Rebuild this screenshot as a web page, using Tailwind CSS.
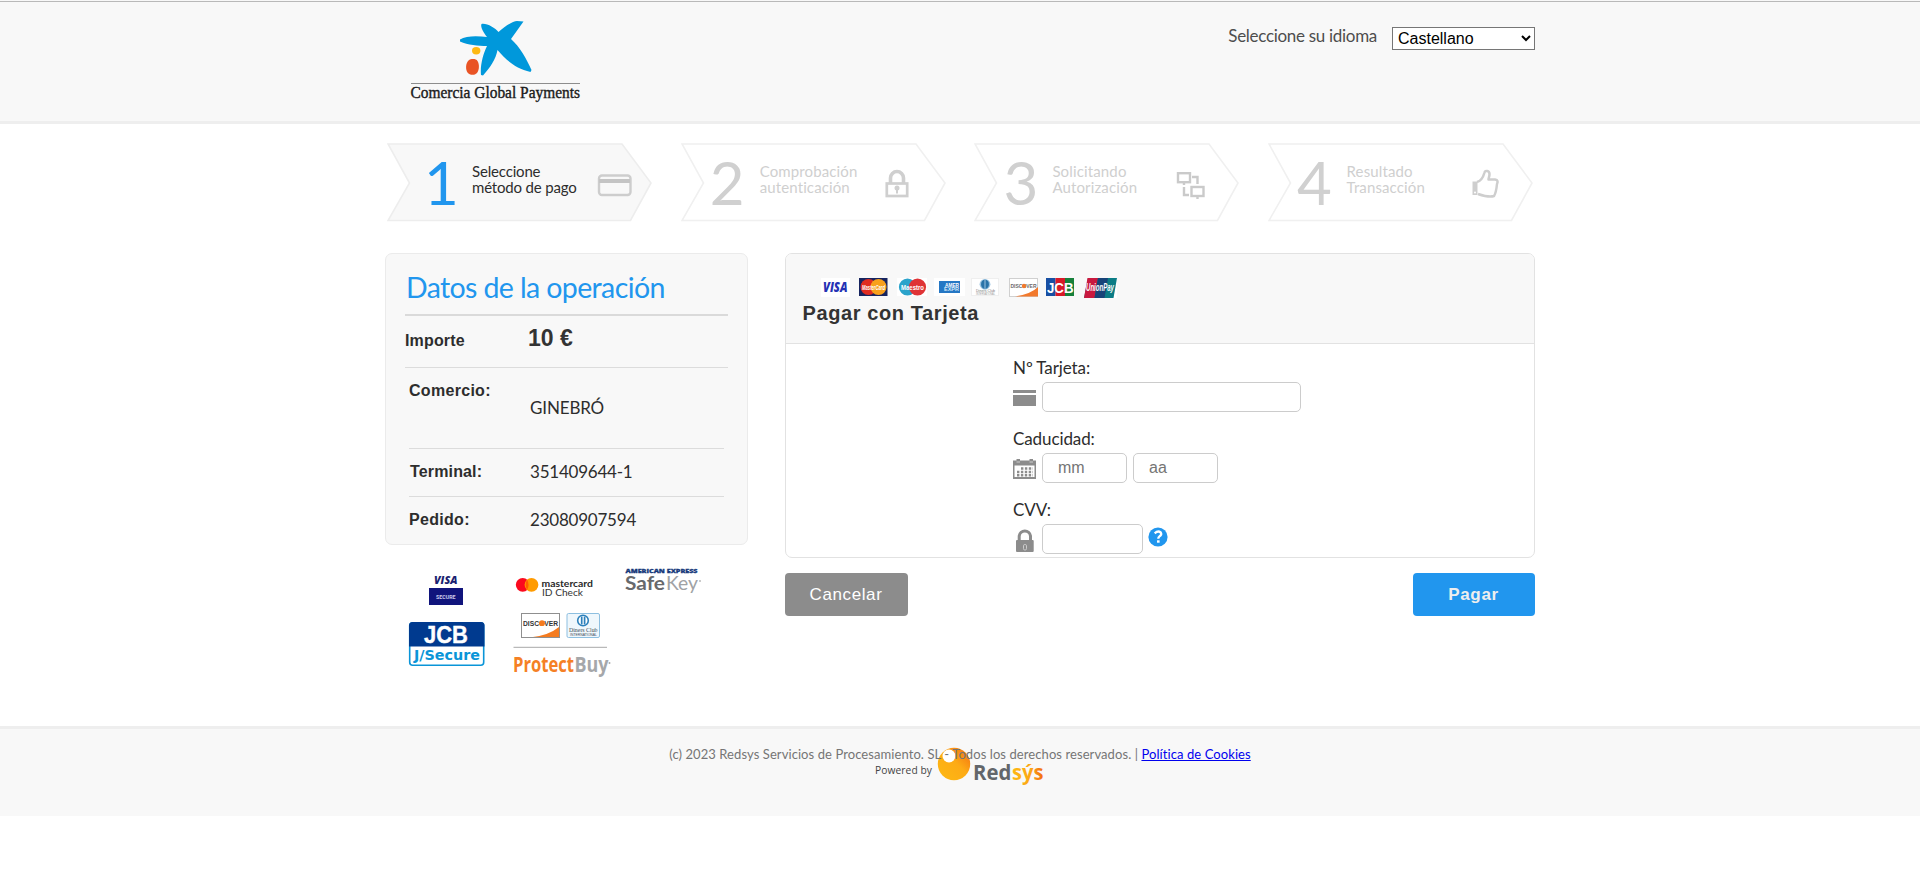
<!DOCTYPE html>
<html lang="es">
<head>
<meta charset="utf-8">
<title>Comercia Global Payments</title>
<script src="https://cdn.jsdelivr.net/npm/@tailwindcss/browser@4"></script>
</head>
<body class="bg-white font-['Lato',sans-serif] text-[#2d2d2d]">
<header class="h-[124px] border-b-[3px] border-[#eeeeee] bg-[#f8f8f8] pt-px">
  <div class="h-px bg-[#b9b9b9]"></div>
  <div class="mx-auto flex w-[1150px] justify-between">
    <svg class="mt-[14px] ml-[23px] overflow-visible" width="176" height="90" viewBox="408 16 176 90">
      <path fill="#0098db" d="M481.500 24C487 23 495 28 498.500 32C504 27 513 21 517 21L523.500 21.500L511 39C520 47 526 58 531.500 70L530.500 72C515 68 506 60 497.500 50C496 59 490 68 483 75.500L481 75C480 66 483 54 487 46C478 46 468 45 460 41.500L460 39.500C466 35.500 478 36 487 37C484 33 480 27 481.500 24Z"/>
      <ellipse cx="476.200" cy="50.700" rx="4.200" ry="3.700" fill="#fdb913"/>
      <path fill="#e95425" d="M468.500 60.500C471 58.500 476 58.500 477.500 61C479.500 64 479.500 70 477 73C474 76 469.500 75 467.500 72.500C465.500 69.500 465.500 63.500 468.500 60.500Z"/>
      <path d="M411 83.500H580" stroke="#8d8d8d"/>
      <text x="410.500" y="98" font-family="Liberation Serif, serif" font-size="17" fill="#1b1b1b" stroke="#1b1b1b" stroke-width=".4" textLength="169.500" lengthAdjust="spacingAndGlyphs">Comercia Global Payments</text>
    </svg>
    <div class="flex items-start pt-[25px]">
      <label class="mt-[-4px] mr-[15px] text-[17px] leading-[26px] tracking-[-.3px] text-[#4d4d4d]">Seleccione su idioma</label>
      <select class="h-[23px] w-[143px] border border-[#767676] bg-white pl-px font-['Liberation_Sans',sans-serif] text-[16px] text-black"><option>Castellano</option></select>
    </div>
  </div>
</header>

<main class="mx-auto h-[602px] w-[1150px]">
  <ol class="flex gap-[27.700px] pt-[18px] pl-[2px]">
    <li class="relative flex h-[80px] w-[266px] shrink-0">
      <svg class="absolute inset-0" width="266" height="80" viewBox="0 0 266 80"><path d="M1 2H235L264 41L243.500 78.500H1L22.500 41Z" fill="#f8f8f8" stroke="#ededed" stroke-width="1.600"/></svg>
      <span class="relative w-[84px] pl-[37px] text-[60px] leading-[80px] text-[#2196ee]">1</span>
      <span class="relative mt-[21px] w-[126px] pl-[1px] text-[15px] leading-[16px] tracking-[-.17px]">Seleccione<br>método de pago</span>
      <svg class="relative mt-[31px]" width="36" height="26" viewBox="0 0 36 26"><rect x="2" y="2.500" width="31.500" height="19.500" rx="3" fill="none" stroke="#cdcdcd" stroke-width="2.400"/><path d="M2 8H33" stroke="#c4c4c4" stroke-width="4"/></svg>
    </li>
    <li class="relative flex h-[80px] w-[266px] shrink-0">
      <svg class="absolute inset-0" width="266" height="80" viewBox="0 0 266 80"><path d="M1 2H235L264 41L243.500 78.500H1L22.500 41Z" fill="#fff" stroke="#f0f0f0" stroke-width="1.600"/></svg>
      <span class="relative w-[79px] pl-[29px] text-[60px] leading-[80px] text-[#d0d0d0]">2</span>
      <span class="relative mt-[21px] w-[125px] text-[15px] leading-[16px] tracking-[.12px] text-[#cfcfcf]">Comprobación<br>autenticación</span>
      <svg class="relative mt-[27px]" width="26" height="32" viewBox="0 0 26 32"><path d="M5.500 15V9A6.500 6.500 0 0 1 18.500 9V15" fill="none" stroke="#cfcfcf" stroke-width="3.600"/><rect x="1.800" y="14.500" width="20.400" height="12.500" fill="none" stroke="#cfcfcf" stroke-width="2.700"/><circle cx="12" cy="19" r="2.500" fill="#cfcfcf"/><path d="M12 18V24.500" stroke="#cfcfcf" stroke-width="2"/></svg>
    </li>
    <li class="relative flex h-[80px] w-[266px] shrink-0">
      <svg class="absolute inset-0" width="266" height="80" viewBox="0 0 266 80"><path d="M1 2H235L264 41L243.500 78.500H1L22.500 41Z" fill="#fff" stroke="#f0f0f0" stroke-width="1.600"/></svg>
      <span class="relative w-[78px] pl-[29px] text-[60px] leading-[80px] text-[#d0d0d0]">3</span>
      <span class="relative mt-[21px] w-[124px] text-[15px] leading-[16px] tracking-[.14px] text-[#cfcfcf]">Solicitando<br>Autorización</span>
      <svg class="relative mt-[28px]" width="30" height="32" viewBox="0 0 30 32" fill="none" stroke="#cacaca" stroke-width="2.400"><rect x="2" y="3.200" width="12" height="9"/><rect x="15.500" y="17" width="12" height="9"/><path d="M8 12V15M21.500 26V29M16 7H21.500V14M8 17V25H13"/></svg>
    </li>
    <li class="relative flex h-[80px] w-[266px] shrink-0">
      <svg class="absolute inset-0" width="266" height="80" viewBox="0 0 266 80"><path d="M1 2H235L264 41L243.500 78.500H1L22.500 41Z" fill="#fff" stroke="#f0f0f0" stroke-width="1.600"/></svg>
      <span class="relative w-[78.500px] pl-[29px] text-[60px] leading-[80px] text-[#d0d0d0]">4</span>
      <span class="relative mt-[21px] w-[124px] text-[15px] leading-[16px] tracking-[.12px] text-[#cfcfcf]">Resultado<br>Transacción</span>
      <svg class="relative mt-[27px]" width="30" height="32" viewBox="0 0 30 32"><path d="M6 13C10 12 12 9 13.500 3.500C14 1 18.500 1.500 18.500 5C18.500 8 17.500 9 17.500 10.500H24C27 11 27 13 26 15C25.500 20 25 24 23 27C19 28.500 10 26 7 25" fill="none" stroke="#cecece" stroke-width="2.500" stroke-linejoin="round"/><path d="M1.500 12.500H6.500V26H1.500Z" fill="#cecece"/><circle cx="4" cy="23.500" r="1" fill="#fff"/></svg>
    </li>
  </ol>

  <div class="mt-[31px] flex items-start justify-between">
    <aside class="w-[363px]">
      <section class="h-[292px] rounded-[7px] border border-[#ebebeb] bg-[#f8f8f8] px-[19px] pt-[16px]">
        <h1 class="h-[46px] border-b-2 border-[#dadada] pl-[1px] text-[28.500px] leading-[34px] tracking-[-.620px] text-[#2196ee]">Datos de la operación</h1>
        <dl class="flex h-[52px] border-b border-[#dcdcdc] font-['Liberation_Sans',sans-serif] font-bold">
          <dt class="w-[123px] pt-[14px] text-[16px] leading-[22px] tracking-[.15px]">Importe</dt>
          <dd class="pt-[11px] text-[23px] leading-[22px] text-[#333]">10 €</dd>
        </dl>
        <div class="mr-[4px] ml-[4px]">
          <dl class="flex h-[81px] border-b border-[#dcdcdc]">
            <dt class="w-[121px] pt-[11px] font-['Liberation_Sans',sans-serif] text-[16px] leading-[24px] font-bold tracking-[.3px]">Comercio:</dt>
            <dd class="pt-[27px] text-[17px] leading-[26px] tracking-[-.15px]">GINEBRÓ</dd>
          </dl>
          <dl class="flex h-[48px] border-b border-[#dcdcdc]">
            <dt class="w-[121px] pt-[11px] pl-px font-['Liberation_Sans',sans-serif] text-[16px] leading-[24px] font-bold tracking-[.15px]">Terminal:</dt>
            <dd class="pt-[10px] text-[17px] leading-[26px] tracking-[-.22px]">351409644-1</dd>
          </dl>
          <dl class="flex h-[47px]">
            <dt class="w-[121px] pt-[11px] font-['Liberation_Sans',sans-serif] text-[16px] leading-[24px] font-bold tracking-[.3px]">Pedido:</dt>
            <dd class="pt-[10px] text-[17px] leading-[26px] tracking-[-.22px]">23080907594</dd>
          </dl>
        </div>
      </section>
      <svg class="mt-[15px] block" width="340" height="130" viewBox="385 560 340 130">
        <text x="434" y="584" font-family="Open Sans, sans-serif" font-weight="800" font-style="italic" font-size="11" fill="#1a1f71" textLength="23.500" lengthAdjust="spacingAndGlyphs">VISA</text>
        <rect x="429" y="588" width="34" height="17" fill="#10147c"/>
        <text x="436" y="599" font-family="Roboto, sans-serif" font-weight="700" font-size="6" fill="#c9caea" textLength="19.500" lengthAdjust="spacingAndGlyphs">SECURE</text>
        <rect x="409.700" y="622.700" width="74" height="42.600" rx="3" fill="#fff" stroke="#0a95d8" stroke-width="1.600"/>
        <path d="M409 646.500V625.500Q409 622 412.500 622H481Q484.500 622 484.500 625.500V646.500Z" fill="#003a8f"/>
        <text x="424" y="643" font-family="Liberation Sans, sans-serif" font-weight="700" font-size="23.500" fill="#fff" stroke="#fff" stroke-width=".4" textLength="44" lengthAdjust="spacingAndGlyphs">JCB</text>
        <text x="414" y="660" font-family="DejaVu Sans, sans-serif" font-weight="700" font-size="14" fill="#0a95d8" textLength="66" lengthAdjust="spacingAndGlyphs">J/Secure</text>
        <circle cx="522.700" cy="584.800" r="6.900" fill="#fb0a1e"/><circle cx="531.500" cy="584.800" r="6.900" fill="#ff9b00"/><path d="M527.100 579.500Q530 584.800 527.100 590.100Q524.200 584.800 527.100 579.500" fill="#ff5f00"/>
        <text x="541.500" y="587" font-family="Lato, sans-serif" font-weight="700" font-size="9" fill="#292929" textLength="51.500" lengthAdjust="spacingAndGlyphs">mastercard</text>
        <text x="542" y="596" font-family="Lato, sans-serif" font-size="8.500" fill="#333" textLength="41" lengthAdjust="spacingAndGlyphs">ID Check</text>
        <text x="625.500" y="573.200" font-family="Open Sans, sans-serif" font-weight="800" font-size="5.600" fill="#16397b" stroke="#16397b" stroke-width=".3" textLength="72" lengthAdjust="spacingAndGlyphs">AMERICAN EXPRESS</text>
        <text x="625" y="590" font-family="Lato, sans-serif" font-weight="700" font-size="19" fill="#67696c" textLength="40" lengthAdjust="spacingAndGlyphs">Safe</text>
        <text x="666" y="590" font-family="Lato, sans-serif" font-size="19" fill="#a0a2a5" textLength="32" lengthAdjust="spacingAndGlyphs">Key</text><circle cx="700" cy="581" r=".8" fill="#888"/>
        <rect x="521.500" y="613.500" width="38" height="24" fill="#fff" stroke="#8f8f8f"/><path d="M533 637Q549 635 559 627V637Z" fill="#f47b20"/>
        <text x="523" y="626" font-family="Liberation Sans, sans-serif" font-weight="700" font-size="7.500" fill="#333" textLength="35" lengthAdjust="spacingAndGlyphs">DISC<tspan fill="#f47b20">O</tspan>VER</text><circle cx="542" cy="623.200" r="2.900" fill="#f47b20"/>
        <rect x="567" y="613.500" width="32.500" height="24" rx="1.500" fill="#eff7fc" stroke="#8dbfe0"/><circle cx="583" cy="620.500" r="5.300" fill="#fff" stroke="#2d80bb" stroke-width="1.600"/><path d="M581.700 616.500V624.500M584.600 616.500V624.500" stroke="#2d80bb" stroke-width="1.700"/>
        <text x="569" y="632" font-family="Liberation Serif, serif" font-size="6.500" fill="#404a55" textLength="28.500" lengthAdjust="spacingAndGlyphs">Diners Club</text>
        <text x="570" y="635.500" font-family="Liberation Sans, sans-serif" font-size="2.800" fill="#404a55" textLength="27" lengthAdjust="spacingAndGlyphs">INTERNATIONAL</text>
        <path d="M513.500 647.300H607" stroke="#a8a8a8"/>
        <text x="513" y="672" font-family="Open Sans, sans-serif" font-weight="700" font-size="20.500" fill="#f58025" textLength="61" lengthAdjust="spacingAndGlyphs">Protect</text>
        <text x="574.500" y="672" font-family="Open Sans, sans-serif" font-weight="700" font-size="20.500" fill="#a5a7aa" textLength="34" lengthAdjust="spacingAndGlyphs">Buy</text><circle cx="609.500" cy="663" r="1" fill="#aaa"/>
      </svg>
    </aside>

    <section class="w-[750px]">
      <form class="h-[305px] rounded-[7px] border border-[#e2e2e2] bg-white">
        <div class="h-[90px] rounded-t-[6px] border-b border-[#e2e2e2] bg-[#f8f8f8] pt-[24px] pl-[17px]">
          <svg class="ml-[18px] block overflow-visible" width="300" height="21" viewBox="821 278 300 21">
            <rect x="821" y="278" width="29" height="19" fill="#fff"/><text x="823" y="292" font-family="Open Sans, sans-serif" font-weight="800" font-style="italic" font-size="13.500" fill="#2432b4" textLength="24.500" lengthAdjust="spacingAndGlyphs">VISA</text>
            <rect x="859" y="278" width="28.500" height="18" fill="#17245f"/><circle cx="868.500" cy="287" r="8" fill="#e02c20"/><circle cx="878.500" cy="287" r="8" fill="#f8a01c"/><text x="862" y="290" font-family="Liberation Sans, sans-serif" font-weight="700" font-style="italic" font-size="7" fill="#fff" textLength="23" lengthAdjust="spacingAndGlyphs">MasterCard</text>
            <rect x="897" y="278" width="30" height="18" fill="#fff"/><circle cx="907.500" cy="287" r="8.600" fill="#2ba3cb"/><circle cx="917.500" cy="287" r="8.600" fill="#df3336"/><text x="901" y="290" font-family="Liberation Sans, sans-serif" font-weight="700" font-size="7.500" fill="#fff" textLength="23" lengthAdjust="spacingAndGlyphs">Maestro</text>
            <rect x="934" y="278" width="31" height="18" fill="#fff"/><rect x="939" y="281" width="21" height="12" fill="#2577c4"/><text x="945" y="286.500" font-family="Liberation Sans, sans-serif" font-weight="700" font-size="5.500" fill="#fff" textLength="14" lengthAdjust="spacingAndGlyphs">AMER</text><text x="944" y="291" font-family="Liberation Sans, sans-serif" font-weight="700" font-size="5" fill="#d4e8f8" textLength="15" lengthAdjust="spacingAndGlyphs">EXPR</text>
            <rect x="971.500" y="278.500" width="27" height="17" fill="#fff" stroke="#efefef"/><circle cx="985" cy="284.300" r="5.400" fill="#9cc4e1"/><path d="M984.500 279.500A5 5 0 0 0 984.500 289ZM985.500 279.500A5 5 0 0 1 985.500 289Z" fill="#2a73a8"/><text x="976" y="292" font-family="Liberation Sans, sans-serif" font-size="3.500" fill="#777" textLength="19" lengthAdjust="spacingAndGlyphs">Diners Club</text><text x="976" y="295" font-family="Liberation Sans, sans-serif" font-size="3" fill="#999" textLength="19" lengthAdjust="spacingAndGlyphs">INTERNATIONAL</text>
            <rect x="1009.500" y="278.500" width="28" height="18" fill="#fff" stroke="#d0d0d0"/><path d="M1015 296.500Q1031 294 1038 287V296.500Z" fill="#f2792c"/><text x="1010.500" y="288" font-family="Liberation Sans, sans-serif" font-weight="700" font-size="6" fill="#6a6a6a" textLength="26" lengthAdjust="spacingAndGlyphs">DISCOVER</text><circle cx="1024" cy="286" r="2.200" fill="#f2792c"/>
            <rect x="1046" y="278" width="9.500" height="18" fill="#174fa3"/><rect x="1055.500" y="278" width="9.500" height="18" fill="#d71928"/><rect x="1065" y="278" width="9" height="18" fill="#16803b"/><text x="1047" y="292.500" font-family="Liberation Sans, sans-serif" font-weight="700" font-size="15" fill="#fff" textLength="26.500" lengthAdjust="spacingAndGlyphs">JCB</text>
            <path d="M1088 278H1117V298H1084Z" fill="#0b7c85"/><path d="M1087.500 278H1098L1094.500 298H1084Z" fill="#c9193f"/><path d="M1098 278H1108L1104.500 298H1094.500Z" fill="#174378"/><path d="M1117 278V298H1113.500Z" fill="#fff"/><text x="1086" y="291" font-family="Liberation Sans, sans-serif" font-weight="700" font-style="italic" font-size="10" fill="#fff" textLength="28" lengthAdjust="spacingAndGlyphs">UnionPay</text>
          </svg>
          <h2 class="mt-[3px] ml-[-.500px] font-['Liberation_Sans',sans-serif] text-[20px] leading-[22px] font-bold tracking-[.6px] text-[#333]">Pagar con Tarjeta</h2>
        </div>
        <div class="flex flex-col pl-[227px] text-[17px]">
          <label class="h-[38px] pt-[11px] leading-[26px] tracking-[-.1px]">Nº Tarjeta:</label>
          <div class="flex h-[33px]">
            <svg class="mt-[8px] mr-[6px]" width="23" height="16"><path d="M0 0H23V3H0ZM0 5H23V16H0Z" fill="#8c8c8c"/></svg>
            <input class="h-[30px] w-[259px] rounded-[5px] border border-[#ccc] bg-white px-[15px]">
          </div>
          <label class="h-[38px] pt-[11px] leading-[26px] tracking-[-.1px]">Caducidad:</label>
          <div class="flex h-[33px] font-['Liberation_Sans',sans-serif] text-[16px]">
            <svg class="mt-[6px] mr-[6px]" width="23" height="20" viewBox="0 0 23 20"><path d="M0 1.500H3.500V0H7V1.500H16.500V0H20V1.500H23V20H0Z" fill="#8c8c8c"/><path d="M1.500 6.500H21.500V18H1.500Z" fill="#fff"/><path d="M8 9.500H20M4 13H20M4 16.200H20" stroke="#8c8c8c" stroke-width="2.400" stroke-dasharray="2.400 1.500"/><path d="M3.500 3H7M16.500 3H20" stroke="#ccc" stroke-width="1"/></svg>
            <input placeholder="mm" class="mr-[6px] h-[30px] w-[85px] rounded-[5px] border border-[#ccc] bg-white px-[15px] placeholder:text-[#757575]">
            <input placeholder="aa" class="h-[30px] w-[85px] rounded-[5px] border border-[#ccc] bg-white px-[15px] placeholder:text-[#757575]">
          </div>
          <label class="h-[38px] pt-[11px] leading-[26px] tracking-[-.1px]">CVV:</label>
          <div class="flex h-[31px]">
            <svg class="mt-[5px] mr-[6px]" width="23" height="23" viewBox="0 0 23 23"><path d="M6.200 12V7A5.700 5.700 0 0 1 17.500 7V12" fill="none" stroke="#8c8c8c" stroke-width="3"/><rect x="3" y="11" width="17.700" height="12" rx="1" fill="#8c8c8c"/><rect x="10.500" y="15.500" width="3" height="5.500" rx="1.300" fill="#8c8c8c" stroke="#ccc"/></svg>
            <input class="h-[30px] w-[101px] rounded-[5px] border border-[#ccc] bg-white px-[15px]">
            <svg class="mt-[3px] ml-[5px]" width="20" height="20" viewBox="0 0 20 20"><circle cx="10" cy="10" r="9.600" fill="#2196ee"/><path d="M6.700 6.300Q10 3.300 12.700 5.300Q14.200 7.800 11.300 9.600Q10.300 10.300 10.300 11.800" fill="none" stroke="#fff" stroke-width="2.300"/><rect x="9" y="13.300" width="2.600" height="2.400" fill="#fff"/></svg>
          </div>
        </div>
      </form>
      <div class="mt-[15px] flex justify-between font-['Liberation_Sans',sans-serif] text-[17px]">
        <button class="h-[43px] w-[123px] rounded-[4px] bg-[#8c8c8c] pr-px tracking-[.6px] text-white">Cancelar</button>
        <button class="h-[43px] w-[122px] rounded-[4px] bg-[#2196ee] pr-px font-bold tracking-[.7px] text-[#eee]">Pagar</button>
      </div>
    </section>
  </div>
</main>

<footer class="relative h-[90px] border-t-[3px] border-[#eeeeee] bg-[#f8f8f8] pt-[15px] text-center text-[13px] leading-[20px] tracking-[.08px] text-[#757575]">
  <svg class="absolute top-[16px] left-[870px]" width="180" height="44" viewBox="870 745 180 44">
    <defs>
      <linearGradient id="ball" x1="0" y1="1" x2="1" y2="0"><stop offset="0" stop-color="#fdb913"/><stop offset=".55" stop-color="#fdab15"/><stop offset="1" stop-color="#f26a10"/></linearGradient>
      <linearGradient id="word" x1="0" x2="1"><stop offset="0" stop-color="#fdb913"/><stop offset=".6" stop-color="#fba615"/><stop offset="1" stop-color="#f26a10"/></linearGradient>
    </defs>
    <circle cx="954" cy="764" r="16.200" fill="url(#ball)"/><circle cx="949" cy="756" r="6.500" fill="#fff"/>
    <text x="875" y="774" font-family="Open Sans, sans-serif" font-size="11.500" fill="#444" textLength="57" lengthAdjust="spacingAndGlyphs">Powered by</text>
    <text x="973" y="780" font-family="Open Sans, sans-serif" font-weight="700" font-size="21.500" fill="#63666a" textLength="38.500" lengthAdjust="spacingAndGlyphs">Red</text>
    <text x="1012" y="780" font-family="Open Sans, sans-serif" font-weight="700" font-size="21.500" fill="url(#word)" textLength="31.500" lengthAdjust="spacingAndGlyphs">sýs</text>
  </svg>
  <p class="relative">(c) 2023 Redsys Servicios de Procesamiento. SL - Todos los derechos reservados. | <a href="#" class="text-[#0000ee] underline">Política de Cookies</a></p>
</footer>
</body>
</html>
